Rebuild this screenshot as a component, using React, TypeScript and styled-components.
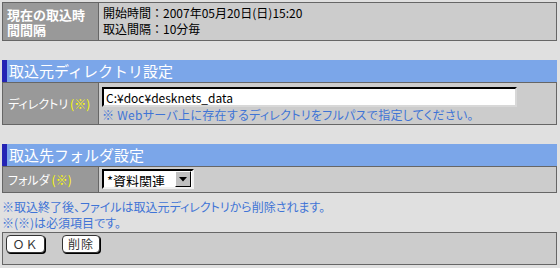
import React from 'react';
import styled, { createGlobalStyle } from 'styled-components';

const GlobalStyle = createGlobalStyle`
  html, body {
    margin: 0;
    padding: 0;
    background: #e0e0e0;
    font-family: "Noto Sans CJK JP", "Liberation Sans", sans-serif;
    font-size: 12px;
  }
`;

const Page = styled.div`
  width: 555px;
  padding: 2px 0 0 2px;
  display: flex;
  flex-direction: column;
`;

const Row = styled.div<{ $height: number }>`
  display: grid;
  grid-template-columns: 96px 1fr;
  border: 1px solid #666666;
  height: ${(p) => p.$height}px;
  box-sizing: border-box;
`;

const Label = styled.div<{ $bold?: boolean }>`
  background: #999999;
  color: #ffffff;
  border-right: 1px solid #666666;
  padding: 0 3px 0 ${(p) => (p.$bold ? 4 : 5)}px;
  display: flex;
  align-items: center;
  font-size: ${(p) => (p.$bold ? 13 : 12)}px;
  font-weight: ${(p) => (p.$bold ? 'bold' : 'normal')};
  line-height: 15px;
  white-space: ${(p) => (p.$bold ? 'normal' : 'nowrap')};
  font-feature-settings: ${(p) => (p.$bold ? 'normal' : '"palt"')};
`;

const Mark = styled.span`
  color: #ffff00;
  margin-left: 2px;
`;

const Value = styled.div<{ $pad: string }>`
  background: #cccccc;
  color: #000000;
  padding: ${(p) => p.$pad};
  display: flex;
  flex-direction: column;
  line-height: 16px;
`;

const SectionTitle = styled.div<{ $top: number }>`
  margin-top: ${(p) => p.$top}px;
  height: 22px;
  background: #7ba6e9;
  border-left: 5px solid #2424b4;
  color: #ffffff;
  font-size: 15px;
  line-height: 22px;
  padding-left: 2px;
`;

const PathInput = styled.input`
  width: 415px;
  height: 20px;
  box-sizing: border-box;
  border-top: 2px solid #000000;
  border-left: 2px solid #000000;
  border-right: 2px solid #d8d8d8;
  border-bottom: 2px solid #d8d8d8;
  background: #ffffff;
  font-family: "Noto Sans CJK JP", "Liberation Sans", sans-serif;
  font-size: 12px;
  padding: 0 2px;
  outline: none;
`;

const Hint = styled.div`
  color: #3f74d6;
  font-size: 12px;
  line-height: 14px;
  margin-top: 1px;
  letter-spacing: 0.3px;
  font-feature-settings: "palt";
`;

const SelectWrap = styled.div`
  position: relative;
  width: 92px;
  height: 20px;
`;

const FolderSelect = styled.select`
  appearance: none;
  width: 100%;
  height: 100%;
  box-sizing: border-box;
  border-top: 2px solid #000000;
  border-left: 2px solid #000000;
  border-right: 2px solid #f0f0f0;
  border-bottom: 2px solid #f0f0f0;
  background: #ffffff;
  color: #000000;
  font-family: "Noto Sans CJK JP", "Liberation Sans", sans-serif;
  font-size: 13px;
  padding: 0 0 0 3px;
  border-radius: 0;
  outline: none;
`;

const Arrow = styled.span`
  position: absolute;
  right: 3px;
  top: 2px;
  width: 16px;
  height: 16px;
  box-sizing: border-box;
  background: #c0c0c0;
  border-top: 1px solid #ffffff;
  border-left: 1px solid #ffffff;
  border-right: 1px solid #000000;
  border-bottom: 1px solid #000000;
  display: flex;
  align-items: center;
  justify-content: center;
  pointer-events: none;
`;

const Notes = styled.div`
  margin-top: 6px;
  color: #3f74d6;
  line-height: 16px;
  font-size: 12px;
  font-feature-settings: "palt";
`;

const ButtonBar = styled.div`
  margin-top: 1px;
  height: 33px;
  box-sizing: border-box;
  background: #cccccc;
  border: 1px solid #666666;
  display: flex;
  align-items: flex-start;
  gap: 17px;
  padding: 2px 0 0 3px;
`;

const Button = styled.button<{ $width: number }>`
  width: ${(p) => p.$width}px;
  height: 18px;
  padding: 0;
  background: #ffffff;
  border: 1px solid #333333;
  border-radius: 4px;
  box-shadow: 1px 1px 0 #000000;
  font-family: "Noto Sans CJK JP", "Liberation Sans", sans-serif;
  font-size: 12px;
  line-height: 16px;
  color: #333333;
  letter-spacing: 1px;
`;

export default function App() {
  return (
    <>
      <GlobalStyle />
      <Page>
        <Row $height={39}>
          <Label $bold>現在の取込時間間隔</Label>
          <Value $pad="2px 4px">
            <div>開始時間：2007年05月20日(日)15:20</div>
            <div>取込間隔：10分毎</div>
          </Value>
        </Row>

        <SectionTitle $top={19}>取込元ディレクトリ設定</SectionTitle>
        <Row $height={43}>
          <Label>
            ディレクトリ<Mark>(※)</Mark>
          </Label>
          <Value $pad="4px 3px 0">
            <PathInput defaultValue="C:¥doc¥desknets_data" />
            <Hint>※ Webサーバ上に存在するディレクトリをフルパスで指定してください。</Hint>
          </Value>
        </Row>

        <SectionTitle $top={19}>取込先フォルダ設定</SectionTitle>
        <Row $height={27}>
          <Label>
            フォルダ<Mark>(※)</Mark>
          </Label>
          <Value $pad="2px 3px 0">
            <SelectWrap>
              <FolderSelect defaultValue="1">
                <option value="1">*資料関連</option>
              </FolderSelect>
              <Arrow>
                <svg width="8" height="5" viewBox="0 0 8 5">
                  <polygon points="0,0 8,0 4,4.5" fill="#000" />
                </svg>
              </Arrow>
            </SelectWrap>
          </Value>
        </Row>

        <Notes>
          <div>※取込終了後、ファイルは取込元ディレクトリから削除されます。</div>
          <div>※(※)は必須項目です。</div>
        </Notes>

        <ButtonBar>
          <Button $width={39}>ＯＫ</Button>
          <Button $width={38}>削除</Button>
        </ButtonBar>
      </Page>
    </>
  );
}
